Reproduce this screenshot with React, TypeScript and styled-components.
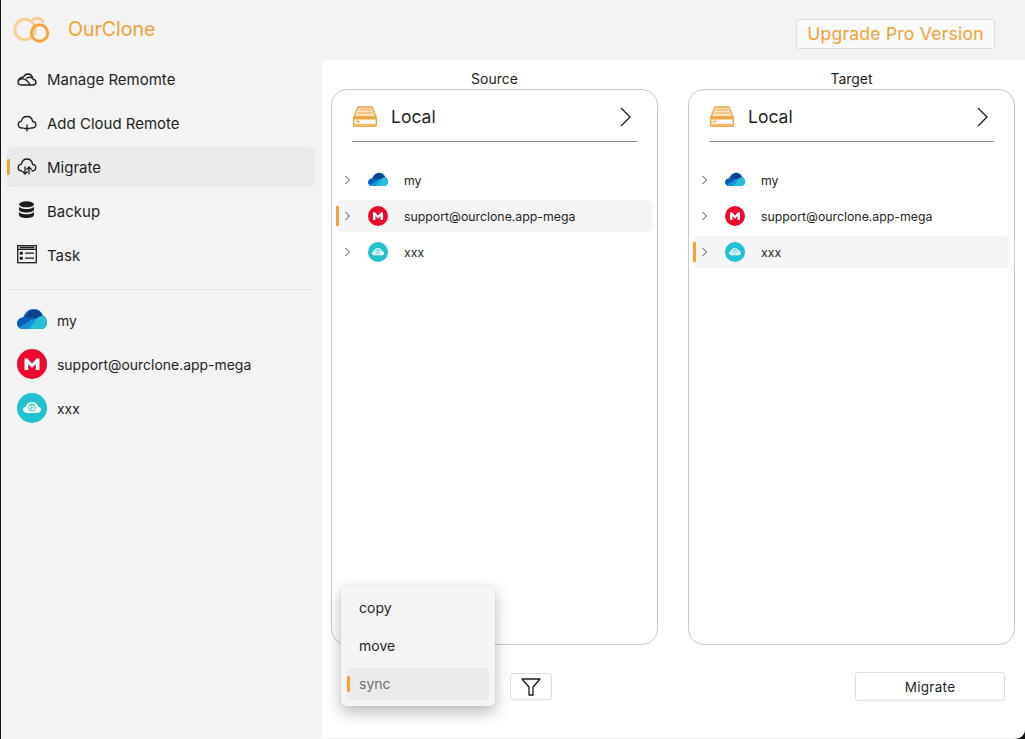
import React from "react";
import styled, { createGlobalStyle } from "styled-components";

const orange = "#f4a136";

const GlobalStyle = createGlobalStyle`
  html, body {
    margin: 0;
    padding: 0;
    height: 100%;
    background: #141414;
    overflow: hidden;
  }
  #root {
    height: 100%;
  }
`;

const Shell = styled.div`
  box-sizing: border-box;
  width: 1024px;
  height: 739px;
  margin-left: 1px;
  padding-bottom: 1px;
  display: flex;
  flex-direction: column;
  background: #f3f3f3;
  border-bottom-right-radius: 10px;
  overflow: hidden;
  font-family: Inter, "Liberation Sans", sans-serif;
  color: #1f1f1f;
`;

const TopBar = styled.header`
  flex: none;
  height: 59px;
  display: flex;
  align-items: center;
  justify-content: space-between;
  padding: 0 30px 0 12px;
  box-sizing: border-box;
`;

const Brand = styled.div`
  display: flex;
  align-items: center;
  gap: 18px;
  font-size: 19.5px;
  color: ${orange};
  margin-top: -1px;
`;

const UpgradeButton = styled.button`
  width: 199px;
  height: 30px;
  margin-top: 8px;
  padding: 0;
  border: 1px solid #dcdcdc;
  border-radius: 3px;
  background: #fafafa;
  color: ${orange};
  font: 17.5px Inter, "Liberation Sans", sans-serif;
  letter-spacing: 0.25px;
`;

const Body = styled.div`
  flex: 1;
  display: flex;
  min-height: 0;
`;

const Sidebar = styled.aside`
  flex: none;
  width: 321px;
  box-sizing: border-box;
  padding: 0 7px 0 6px;
`;

const NavList = styled.nav`
  display: flex;
  flex-direction: column;
  gap: 4px;
`;

const NavItem = styled.div<{ $active?: boolean }>`
  position: relative;
  height: 40px;
  display: flex;
  align-items: center;
  gap: 10px;
  padding-left: 10px;
  border-radius: 4px;
  font-size: 15px;
  background: ${(p) => (p.$active ? "#ebebeb" : "transparent")};
`;

const Marker = styled.span<{ $height: number }>`
  position: absolute;
  left: 0;
  top: 50%;
  width: 3px;
  height: ${(p) => p.$height}px;
  transform: translateY(-50%);
  border-radius: 1px;
  background: ${orange};
`;

const Divider = styled.hr`
  margin: 14px 2px 15px 2px;
  border: 0;
  border-top: 1px solid #e2e2e2;
`;

const RemoteList = styled.div`
  display: flex;
  flex-direction: column;
  gap: 14px;
  padding-left: 10px;
`;

const RemoteItem = styled.div`
  height: 30px;
  display: flex;
  align-items: center;
  gap: 10px;
  font-size: 13.95px;
`;

const Main = styled.main`
  flex: 1;
  min-width: 0;
  margin-top: 1px;
  display: flex;
  flex-direction: column;
  background: #fff;
  border-top-left-radius: 6px;
  box-sizing: border-box;
  padding: 0 9px 0 9px;
`;

const Columns = styled.div`
  display: flex;
  gap: 30px;
`;

const Column = styled.section`
  width: 327px;
  display: flex;
  flex-direction: column;
`;

const ColumnLabel = styled.div`
  height: 29px;
  padding-top: 11px;
  box-sizing: border-box;
  text-align: center;
  font-size: 14px;
  line-height: 16px;
`;

const Panel = styled.div`
  box-sizing: border-box;
  height: 556px;
  border: 1px solid #c9c9c9;
  border-radius: 16px;
  padding: 0 4px;
`;

const PanelHeader = styled.div`
  box-sizing: border-box;
  height: 52px;
  padding: 2px 5px 0 0;
  margin: 0 16px 0 16px;
  display: flex;
  align-items: center;
  border-bottom: 1px solid #8f8f8f;
  font-size: 17.5px;
`;

const DriveSlot = styled.span`
  flex: none;
  box-sizing: border-box;
  width: 39px;
  padding-left: 1px;
  display: flex;
`;

const HeaderLabel = styled.span`
  flex: 1;
`;

const PanelRows = styled.div`
  margin-top: 22px;
  display: flex;
  flex-direction: column;
  gap: 4px;
`;

const Row = styled.div<{ $active?: boolean }>`
  position: relative;
  height: 32px;
  display: flex;
  align-items: center;
  padding-left: 8px;
  border-radius: 6px;
  font-size: 12.3px;
  background: ${(p) => (p.$active ? "#f5f5f5" : "transparent")};
`;

const RowChevron = styled.svg`
  flex: none;
  width: 8px;
  height: 10px;
  margin-right: 16px;
`;

const RowLabel = styled.span`
  margin-left: 16px;
`;

const Footer = styled.div`
  position: relative;
  flex: 1;
  display: flex;
  align-items: flex-start;
  justify-content: space-between;
  padding: 27px 11px 0 179px;
`;

const FilterButton = styled.button`
  width: 42px;
  height: 27px;
  margin-top: 1px;
  padding: 0;
  display: flex;
  align-items: center;
  justify-content: center;
  background: #fff;
  border: 1px solid #dedede;
  border-radius: 3px;
`;

const MigrateButton = styled.button`
  width: 150px;
  height: 29px;
  padding: 0;
  background: #fff;
  border: 1px solid #dedede;
  border-radius: 3px;
  color: #1f1f1f;
  font: 13.5px Inter, "Liberation Sans", sans-serif;
  letter-spacing: 0.3px;
`;

const Menu = styled.div`
  position: absolute;
  left: 10px;
  bottom: 32px;
  width: 154px;
  height: 120px;
  box-sizing: border-box;
  padding: 6px;
  display: flex;
  flex-direction: column;
  gap: 6px;
  background: #f5f5f5;
  border-radius: 5px;
  box-shadow: 0 6px 16px rgba(0, 0, 0, 0.28), 0 0 3px rgba(0, 0, 0, 0.08);
`;

const MenuItem = styled.div<{ $active?: boolean }>`
  position: relative;
  box-sizing: border-box;
  height: 32px;
  display: flex;
  align-items: center;
  padding: 0 0 2px 12px;
  border-radius: 4px;
  font-size: 14px;
  color: ${(p) => (p.$active ? "#6e6e6e" : "#262626")};
  background: ${(p) => (p.$active ? "#ebebeb" : "transparent")};
`;

function LogoMark() {
  return (
    <svg width="37" height="28" viewBox="0 0 37 28" fill="none">
      <path d="M19.500 5A7 7 0 0 1 30.500 7.500" stroke="#f8c98a" strokeWidth="2.800" />
      <circle cx="12" cy="14.500" r="10.200" stroke="#f9cf95" strokeWidth="3" />
      <circle cx="26.500" cy="18" r="8.200" stroke="#f4a63f" strokeWidth="3" />
    </svg>
  );
}

function ManageIcon() {
  return (
    <svg width="20" height="20" viewBox="0 0 20 20" fill="none" stroke="#1c1c1c" strokeWidth="1.300" strokeLinejoin="round">
      <path d="M4.500 16h11.200c1.900 0 3.300-1.300 3.300-2.800 0-1.600-1.300-2.800-3-2.900C15.400 7.500 13.300 5 11 5c-2 0-3.600 1.100-4.500 3C3 8.800 1 10.600 1 13.100c0 1.700 1.500 2.900 3.500 2.900z" />
      <path d="M1.500 11.500c3-2.500 8-2.500 11.500 4.400M9 9.500c2-1.500 5-1.300 7-.2" />
    </svg>
  );
}

function CloudAddIcon() {
  return (
    <svg width="20" height="20" viewBox="0 0 20 20" fill="none" stroke="#1c1c1c" strokeWidth="1.300" strokeLinecap="round" strokeLinejoin="round">
      <path d="M6 15H4.800C2.700 15 1.200 13.500 1.200 11.600c0-1.800 1.400-3.200 3.200-3.400C5 5.400 7.200 3.500 10 3.500c2.900 0 5.100 2.100 5.600 4.800 1.800.1 3.200 1.500 3.200 3.300 0 1.900-1.500 3.400-3.500 3.400H14" />
      <path d="M10 12v6M7.200 15.500h5.600" />
    </svg>
  );
}

function CloudSyncIcon() {
  return (
    <svg width="20" height="20" viewBox="0 0 20 20" fill="none" stroke="#1c1c1c" strokeWidth="1.300" strokeLinecap="round" strokeLinejoin="round">
      <path d="M5 14H4.600C2.600 14 1.200 12.500 1.200 10.600c0-1.800 1.400-3.200 3.200-3.400C5 4.200 7.200 2 10 2c2.900 0 5.100 2.400 5.600 5.300 1.800.1 3.200 1.600 3.200 3.300 0 1.900-1.500 3.400-3.500 3.400H15" />
      <path d="M8 10v7M5.800 14.800 8 17l2.200-2.200M12 17v-7M9.800 12.200 12 10l2.200 2.200" />
    </svg>
  );
}

function DatabaseIcon() {
  return (
    <svg width="20" height="20" viewBox="0 0 20 20" fill="#1c1c1c">
      <ellipse cx="9.500" cy="3.300" rx="7.500" ry="3" />
      <path d="M2 5.800v2.600c0 1.700 3.400 3 7.500 3s7.500-1.300 7.500-3V5.800c-1.400 1.500-4.300 2.300-7.500 2.300S3.400 7.300 2 5.800z" />
      <path d="M2 11v3c0 1.700 3.400 3 7.500 3s7.500-1.300 7.500-3v-3c-1.400 1.500-4.300 2.300-7.500 2.300S3.400 12.500 2 11z" />
    </svg>
  );
}

function TaskIcon() {
  return (
    <svg width="20" height="20" viewBox="0 0 20 20" fill="none" stroke="#1c1c1c" strokeWidth="1.300">
      <rect x="0.700" y="0.700" width="18.600" height="17" />
      <path d="M.7 4.300h18.600M2.700 2.500h14.600" />
      <rect x="3" y="7" width="2.600" height="2.400" fill="#1c1c1c" strokeWidth="0.500" />
      <rect x="3" y="12" width="2.600" height="2.400" fill="#1c1c1c" strokeWidth="0.500" />
      <path d="M8 8.200h9M8 13.200h9" />
    </svg>
  );
}

function OneDriveLogo({ size }: { size: number }) {
  return (
    <svg width={size} height={size} viewBox="0 0 30 30">
      <path d="M6 24C2.500 24 0 21.500 0 18.500 0 15 2.800 12.500 6.300 12.300 8 7.500 12 4 17 4c4.200 0 7.500 2.800 8.800 6.300C28.200 11.800 30 14.500 30 17.500 30 21.200 27.500 24 24 24z" fill="#0a5cb4" />
      <path d="M9 13C10 8 13 5 17 5c4 0 7 2.500 8 6-2 0-4 1-5.500 2.500-3-1.500-7-1.500-10.500-.5z" fill="#0d3f8c" />
      <path d="M2 22.500 14 15c2-1.300 4-1.800 6-1.500L27 24H6c-1.500 0-3-.5-4-1.500z" fill="#1691dc" />
      <path d="M20 13.500c1.500-1.800 4-3 6-3 2.500 1.500 4 4 4 7 0 3.700-2.500 6.500-6 6.500H12z" fill="#26bdd6" />
    </svg>
  );
}

function MegaLogo({ size }: { size: number }) {
  return (
    <svg width={size} height={size} viewBox="0 0 30 30">
      <circle cx="15" cy="15" r="15" fill="#ee0a2b" />
      <path d="M7.500 21V9.500h3L15 14.500l4.500-5h3V21h-3.700v-6L15 19l-3.800-4v6z" fill="#fff" />
    </svg>
  );
}

function PCloudLogo({ size }: { size: number }) {
  return (
    <svg width={size} height={size} viewBox="0 0 30 30">
      <circle cx="15" cy="15" r="15" fill="#20c2d0" />
      <path d="M10 20c-2.200 0-4-1.300-4-3.200 0-1.600 1.200-2.800 2.800-3C9.500 11 12 9 15 9s5.500 2 6.200 4.800c1.600.2 2.800 1.400 2.800 3 0 1.900-1.800 3.200-4 3.200z" fill="#fff" />
      <circle cx="15" cy="14.500" r="3.600" fill="none" stroke="#20c2d0" strokeWidth="0.900" />
      <path d="M14 17v-5h1.400a1.400 1.400 0 0 1 0 2.800H14" fill="none" stroke="#20c2d0" strokeWidth="0.900" />
    </svg>
  );
}

function DriveIcon() {
  return (
    <svg width="24" height="21" viewBox="0 0 24 21" fill="none">
      <path d="M5 1h14l4 10H1z" fill="#fbe3c2" stroke="#f0a545" strokeWidth="1.400" strokeLinejoin="round" />
      <path d="M6 4h12M4.500 7h15" stroke="#f0a545" strokeWidth="1.200" />
      <rect x="0.700" y="11" width="22.600" height="9.300" rx="1" fill="#fff" stroke="#f0a545" strokeWidth="1.400" />
      <rect x="0.700" y="11" width="22.600" height="2.500" fill="#f0a545" />
      <rect x="0.700" y="17.800" width="22.600" height="2.500" fill="#f5b769" />
      <rect x="3" y="14.800" width="3.500" height="1.500" fill="#f0a545" />
    </svg>
  );
}

function LargeChevron() {
  return (
    <svg width="13" height="20" viewBox="0 0 13 20" fill="none" stroke="#1c1c1c" strokeWidth="1.300">
      <path d="M2 1l9 9-9 9" />
    </svg>
  );
}

function FilterIcon() {
  return (
    <svg width="20" height="18" viewBox="0 0 20 18" fill="none" stroke="#1c1c1c" strokeWidth="1.300" strokeLinejoin="round">
      <path d="M1 1h18l-7 8v8H8V9z" />
    </svg>
  );
}

const navItems = [
  { label: "Manage Remomte", icon: <ManageIcon /> },
  { label: "Add Cloud Remote", icon: <CloudAddIcon /> },
  { label: "Migrate", icon: <CloudSyncIcon />, active: true },
  { label: "Backup", icon: <DatabaseIcon /> },
  { label: "Task", icon: <TaskIcon /> },
];

const remotes = [
  { name: "my", Logo: OneDriveLogo },
  { name: "support@ourclone.app-mega", Logo: MegaLogo },
  { name: "xxx", Logo: PCloudLogo },
];

function RemotePanel({ title, selected }: { title: string; selected: string }) {
  return (
    <Column>
      <ColumnLabel>{title}</ColumnLabel>
      <Panel>
        <PanelHeader>
          <DriveSlot>
            <DriveIcon />
          </DriveSlot>
          <HeaderLabel>Local</HeaderLabel>
          <LargeChevron />
        </PanelHeader>
        <PanelRows>
          {remotes.map(({ name, Logo }) => (
            <Row key={name} $active={name === selected}>
              {name === selected && <Marker $height={20} />}
              <RowChevron viewBox="0 0 8 10" fill="none" stroke="#333" strokeWidth="0.900">
                <path d="M1.500 1l4 4-4 4" />
              </RowChevron>
              <Logo size={20} />
              <RowLabel>{name}</RowLabel>
            </Row>
          ))}
        </PanelRows>
      </Panel>
    </Column>
  );
}

export default function App() {
  return (
    <>
      <GlobalStyle />
      <Shell>
        <TopBar>
          <Brand>
            <LogoMark />
            OurClone
          </Brand>
          <UpgradeButton>Upgrade Pro Version</UpgradeButton>
        </TopBar>
        <Body>
          <Sidebar>
            <NavList>
              {navItems.map((item) => (
                <NavItem key={item.label} $active={item.active}>
                  {item.active && <Marker $height={16} />}
                  {item.icon}
                  {item.label}
                </NavItem>
              ))}
            </NavList>
            <Divider />
            <RemoteList>
              {remotes.map(({ name, Logo }) => (
                <RemoteItem key={name}>
                  <Logo size={30} />
                  {name}
                </RemoteItem>
              ))}
            </RemoteList>
          </Sidebar>
          <Main>
            <Columns>
              <RemotePanel title="Source" selected="support@ourclone.app-mega" />
              <RemotePanel title="Target" selected="xxx" />
            </Columns>
            <Footer>
              <Menu>
                <MenuItem>copy</MenuItem>
                <MenuItem>move</MenuItem>
                <MenuItem $active>
                  <Marker $height={16} />
                  sync
                </MenuItem>
              </Menu>
              <FilterButton>
                <FilterIcon />
              </FilterButton>
              <MigrateButton>Migrate</MigrateButton>
            </Footer>
          </Main>
        </Body>
      </Shell>
    </>
  );
}
